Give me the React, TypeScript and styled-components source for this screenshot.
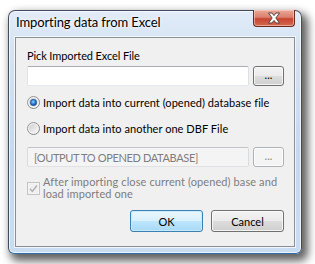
import React from "react";
import styled, { createGlobalStyle } from "styled-components";

const Global = createGlobalStyle`
  html, body { margin: 0; padding: 0; background: #ffffff; }
  body { font-family: "Lato", "Liberation Sans", sans-serif; font-size: 11px; color: #000; }
  * { box-sizing: border-box; }
`;

const Page = styled.div`
  width: 315px;
  height: 264px;
  padding: 10px 0 0 8px;
  overflow: hidden;
`;

const Window = styled.div`
  width: 294px;
  height: 244px;
  display: flex;
  flex-direction: column;
  padding: 0 6px 6px 6px;
  border: 1px solid rgba(30, 40, 55, 0.8);
  border-bottom-color: #2c6fa8;
  border-radius: 7px 7px 6px 6px;
  background: linear-gradient(180deg, #e2ecf8 0%, #d5e4f4 14%, #c4d9f0 60%, #c9ddf2 100%);
  box-shadow: inset 0 0 0 1px rgba(255, 255, 255, 0.65), 4px 5px 9px 2px rgba(0, 0, 0, 0.62);
`;

const TitleBar = styled.div`
  height: 26px;
  display: flex;
  align-items: flex-start;
  justify-content: space-between;
`;

const Title = styled.div`
  margin: 4px 0 0 1px;
  line-height: 15px;
  font-size: 13px;
  letter-spacing: -0.1px;
  color: #000;
  text-shadow: 0 0 5px rgba(255, 255, 255, 0.95), 0 0 2px rgba(255, 255, 255, 0.9);
`;

const CloseButton = styled.button`
  margin-top: -1px;
  width: 42px;
  height: 17px;
  padding: 0;
  border: 1px solid #6b2a22;
  border-top: none;
  border-radius: 0 0 4px 4px;
  background: linear-gradient(180deg, #e9a99a 0%, #dc806d 45%, #c7452f 55%, #d46a52 100%);
  box-shadow: inset 0 0 0 1px rgba(255, 215, 200, 0.55);
  display: flex;
  align-items: center;
  justify-content: center;
`;

const Client = styled.div`
  flex: 1;
  display: flex;
  flex-direction: column;
  padding: 10px 10px 0 11px;
  background: #f0f0f0;
  border: 1px solid #8a8f95;
  box-shadow: 0 0 0 1px rgba(255, 255, 255, 0.7);
`;

const Label = styled.div`
  line-height: 15px;
  letter-spacing: -0.1px;
`;

const FieldRow = styled.div<{ $top: number }>`
  margin-top: ${(p) => p.$top}px;
  display: flex;
  gap: 4px;
  height: 20px;
`;

const TextField = styled.input<{ $disabled?: boolean }>`
  width: 222px;
  height: 20px;
  margin: 0;
  padding: 0 0 0 6px;
  font-family: "Lato", "Liberation Sans", sans-serif;
  font-size: 11px;
  letter-spacing: ${(p) => (p.$disabled ? "-0.35px" : "0")};
  outline: none;
  border: 1px solid;
  border-radius: 2px;
  border-color: ${(p) => (p.$disabled ? "#c2c4c8 #dadbde #dfe1e4 #dadbde" : "#abadb3 #dbdfe6 #e3e9ef #e2e3ea")};
  background: ${(p) => (p.$disabled ? "#f4f4f4" : "#ffffff")};
  color: ${(p) => (p.$disabled ? "#7d7d7d" : "#000")};
`;

const SmallButton = styled.button<{ $disabled?: boolean }>`
  width: 31px;
  height: 20px;
  padding: 0 0 3px 0;
  border-radius: 3px;
  font-family: "Lato", "Liberation Sans", sans-serif;
  font-size: 11px;
  line-height: 11px;
  border: 1px solid ${(p) => (p.$disabled ? "#adb2b5" : "#707070")};
  color: ${(p) => (p.$disabled ? "#838383" : "#000")};
  background: ${(p) =>
    p.$disabled
      ? "#f4f4f4"
      : "linear-gradient(180deg, #f2f2f2 0%, #ebebeb 49%, #dddddd 50%, #cfcfcf 100%)"};
  box-shadow: inset 0 0 0 1px rgba(255, 255, 255, 0.75);
`;

const OptionRow = styled.div<{ $top: number }>`
  margin-top: ${(p) => p.$top}px;
  height: 16px;
  display: flex;
  align-items: center;
  gap: 3px;
  line-height: 15px;
  white-space: nowrap;
  letter-spacing: 0.05px;
`;

const CheckRow = styled.div`
  margin-top: 9px;
  display: flex;
  align-items: center;
  gap: 3px;
  color: #7d7d7d;
`;

const CheckText = styled.div`
  line-height: 12px;
  white-space: nowrap;
  letter-spacing: 0.1px;
`;

const Footer = styled.div`
  margin-top: 10px;
  display: flex;
  justify-content: flex-end;
  gap: 8px;
`;

const DialogButton = styled.button<{ $primary?: boolean }>`
  width: 73px;
  height: 22px;
  padding: 0;
  border-radius: 3px;
  font-family: "Lato", "Liberation Sans", sans-serif;
  font-size: 11px;
  color: #000;
  border: 1px solid ${(p) => (p.$primary ? "#3c7fb1" : "#707070")};
  background: ${(p) =>
    p.$primary
      ? "linear-gradient(180deg, #eaf6fd 0%, #d9f0fc 49%, #bee6fd 50%, #a7d9f5 100%)"
      : "linear-gradient(180deg, #f2f2f2 0%, #ebebeb 49%, #dddddd 50%, #cfcfcf 100%)"};
  box-shadow: inset 0 0 0 1px ${(p) => (p.$primary ? "rgba(200, 235, 252, 0.9)" : "rgba(255, 255, 255, 0.75)")};
`;

const CloseIcon = () => (
  <svg width="14" height="12" viewBox="0 0 14 12">
    <path
      d="M1.5 1 H5 L7 3.6 L9 1 H12.5 L8.8 6 L12.5 11 H9 L7 8.4 L5 11 H1.5 L5.2 6 Z"
      fill="#ffffff"
      stroke="#4b3a38"
      strokeWidth="0.9"
      strokeLinejoin="round"
    />
  </svg>
);

const Radio = ({ checked, id }: { checked?: boolean; id: string }) => (
  <svg width="13" height="13" viewBox="0 0 13 13" style={{ flex: "none" }}>
    <defs>
      <linearGradient id={`${id}-ring`} x1="0" y1="0" x2="1" y2="1">
        <stop offset="0" stopColor="#9a9a9a" />
        <stop offset="1" stopColor="#7a7a7a" />
      </linearGradient>
      <linearGradient id={`${id}-fill`} x1="0" y1="0" x2="1" y2="1">
        <stop offset="0" stopColor="#cfcfcf" />
        <stop offset="1" stopColor="#f8f8f8" />
      </linearGradient>
      <radialGradient id={`${id}-dot`} cx="0.45" cy="0.4" r="0.6">
        <stop offset="0" stopColor="#8fd0ff" />
        <stop offset="0.55" stopColor="#2a7fd8" />
        <stop offset="1" stopColor="#0d3f86" />
      </radialGradient>
    </defs>
    <circle cx="6.5" cy="6.5" r="6" fill="#f4f4f4" stroke={`url(#${id}-ring)`} strokeWidth="1" />
    <circle cx="6.5" cy="6.5" r="4.5" fill={`url(#${id}-fill)`} />
    {checked && <circle cx="6.5" cy="6.5" r="3.2" fill={`url(#${id}-dot)`} stroke="#1b4f8f" strokeWidth="0.6" />}
  </svg>
);

const DisabledCheck = () => (
  <svg width="13" height="13" viewBox="0 0 13 13" style={{ flex: "none" }}>
    <rect x="0.5" y="0.5" width="12" height="12" fill="#f4f4f4" stroke="#c4c4c4" />
    <rect x="2" y="2" width="9" height="9" fill="#f0f0f0" />
    <path d="M3 6.8 L5.3 9.2 L10 3.6" fill="none" stroke="#b3b3b3" strokeWidth="1.6" />
  </svg>
);

export default function App() {
  return (
    <>
      <Global />
      <Page>
        <Window>
          <TitleBar>
            <Title>Importing data from Excel</Title>
            <CloseButton aria-label="Close">
              <CloseIcon />
            </CloseButton>
          </TitleBar>
          <Client>
            <Label>Pick Imported Excel File</Label>
            <FieldRow $top={3}>
              <TextField readOnly value="" />
              <SmallButton>...</SmallButton>
            </FieldRow>
            <OptionRow $top={8}>
              <Radio id="r1" checked />
              <span>Import data into current (opened) database file</span>
            </OptionRow>
            <OptionRow $top={10}>
              <Radio id="r2" />
              <span>Import data into another one DBF File</span>
            </OptionRow>
            <FieldRow $top={11}>
              <TextField $disabled readOnly value="[OUTPUT TO OPENED DATABASE]" />
              <SmallButton $disabled>...</SmallButton>
            </FieldRow>
            <CheckRow>
              <DisabledCheck />
              <CheckText>
                After importing close current (opened) base and
                <br />
                load imported one
              </CheckText>
            </CheckRow>
            <Footer>
              <DialogButton $primary>OK</DialogButton>
              <DialogButton>Cancel</DialogButton>
            </Footer>
          </Client>
        </Window>
      </Page>
    </>
  );
}
